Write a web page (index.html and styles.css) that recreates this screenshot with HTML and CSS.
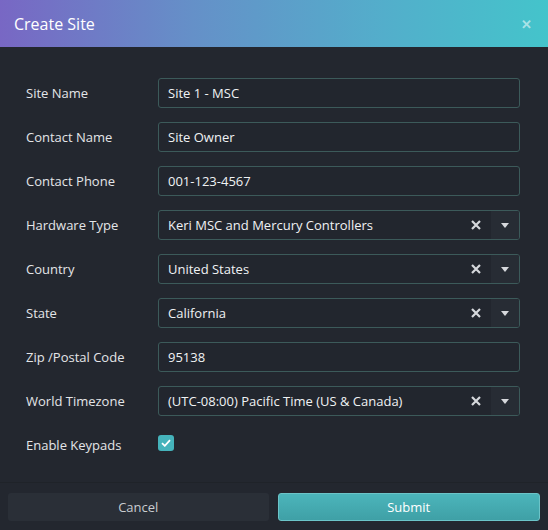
FILE: index.html
```html
<!DOCTYPE html>
<html lang="en">
<head>
  <meta charset="UTF-8" />
  <title>Create Site</title>
  <link rel="stylesheet" href="styles.css">
</head>
<body>
  <div class="modal">
    <div class="modal-header">
      <h1>Create Site</h1>
      <span class="close">&#x2715;</span>
    </div>

    <div class="modal-body">
      <div class="row">
        <label>Site Name</label>
        <div class="field">Site 1 - MSC</div>
      </div>
      <div class="row">
        <label>Contact Name</label>
        <div class="field">Site Owner</div>
      </div>
      <div class="row">
        <label>Contact Phone</label>
        <div class="field">001-123-4567</div>
      </div>
      <div class="row">
        <label>Hardware Type</label>
        <div class="field select">
          <span class="value">Keri MSC and Mercury Controllers</span>
          <svg class="clear" width="10" height="10" viewBox="0 0 10 10"><path d="M1 1 L9 9 M9 1 L1 9" stroke="#d6d8dc" stroke-width="2.2"/></svg>
          <span class="arrow"></span>
        </div>
      </div>
      <div class="row">
        <label>Country</label>
        <div class="field select">
          <span class="value">United States</span>
          <svg class="clear" width="10" height="10" viewBox="0 0 10 10"><path d="M1 1 L9 9 M9 1 L1 9" stroke="#d6d8dc" stroke-width="2.2"/></svg>
          <span class="arrow"></span>
        </div>
      </div>
      <div class="row">
        <label>State</label>
        <div class="field select">
          <span class="value">California</span>
          <svg class="clear" width="10" height="10" viewBox="0 0 10 10"><path d="M1 1 L9 9 M9 1 L1 9" stroke="#d6d8dc" stroke-width="2.2"/></svg>
          <span class="arrow"></span>
        </div>
      </div>
      <div class="row">
        <label>Zip /Postal Code</label>
        <div class="field">95138</div>
      </div>
      <div class="row">
        <label>World Timezone</label>
        <div class="field select">
          <span class="value">(UTC-08:00) Pacific Time (US &amp; Canada)</span>
          <svg class="clear" width="10" height="10" viewBox="0 0 10 10"><path d="M1 1 L9 9 M9 1 L1 9" stroke="#d6d8dc" stroke-width="2.2"/></svg>
          <span class="arrow"></span>
        </div>
      </div>
      <div class="row">
        <label>Enable Keypads</label>
        <span class="check">
          <svg width="10" height="8" viewBox="0 0 10 8"><path d="M1 4.2 L3.8 6.8 L9 1.2" fill="none" stroke="#fff" stroke-width="1.8"/></svg>
        </span>
      </div>
    </div>

    <div class="modal-footer">
      <button class="btn btn-cancel">Cancel</button>
      <button class="btn btn-submit">Submit</button>
    </div>
  </div>
</body>
</html>
```

FILE: styles.css
```css
* {
  box-sizing: border-box;
  margin: 0;
  padding: 0;
}

html, body {
  background: #23272f;
  color: #e6e8ea;
  font-family: 'Open Sans', 'Noto Sans', sans-serif;
  font-size: 13px;
}

.modal {
  width: 548px;
  height: 530px;
  display: flex;
  flex-direction: column;
}

.modal-header {
  height: 47px;
  background: linear-gradient(90deg, #7867c4 0%, #6590c8 35%, #53aecb 70%, #44c4cb 100%);
  display: flex;
  align-items: center;
  justify-content: space-between;
  padding: 0 16px 0 14px;
}

.modal-header h1 {
  font-size: 16px;
  font-weight: normal;
  color: #fff;
}

.close {
  color: rgba(255, 255, 255, 0.55);
  font-size: 13px;
  font-weight: bold;
}

.modal-body {
  padding: 31px 28px 0 26px;
  display: flex;
  flex-direction: column;
  gap: 14px;
  flex: 1;
}

.row {
  display: flex;
  align-items: center;
  height: 30px;
}

.row label {
  width: 132px;
  color: #e3e5e8;
}

.field {
  flex: 1;
  height: 30px;
  border: 1px solid #3c5a5a;
  border-radius: 3px;
  background: #22262e;
  padding: 0 9px;
  display: flex;
  align-items: center;
  color: #f0f2f4;
}

.field.select {
  padding-right: 0;
}

.field .value {
  flex: 1;
}

.field .clear {
  margin-right: 10px;
}

.field .arrow {
  width: 28px;
  height: 28px;
  background: #272c34;
  border-radius: 0 2px 2px 0;
  display: flex;
  align-items: center;
  justify-content: center;
}

.field .arrow::after {
  content: "";
  border-left: 4px solid transparent;
  border-right: 4px solid transparent;
  border-top: 5px solid #d6d8dc;
}

.check {
  width: 16px;
  height: 16px;
  margin-top: -4px;
  border-radius: 3px;
  background: #45b3bb;
  display: flex;
  align-items: center;
  justify-content: center;
}

.modal-footer {
  border-top: 1px solid #1f2329;
  display: flex;
  gap: 9px;
  padding: 10px 8px 9px 8px;
}

.btn {
  flex: 1;
  height: 28px;
  border-radius: 3px;
  font-family: inherit;
  font-size: 13px;
  border: none;
}

.btn-cancel {
  background: #2a2f37;
  color: #c9ccd0;
}

.btn-submit {
  background: linear-gradient(180deg, #4cb5bb, #3fa0a6);
  border: 1px solid #6cc4c8;
  color: #fff;
}
```
